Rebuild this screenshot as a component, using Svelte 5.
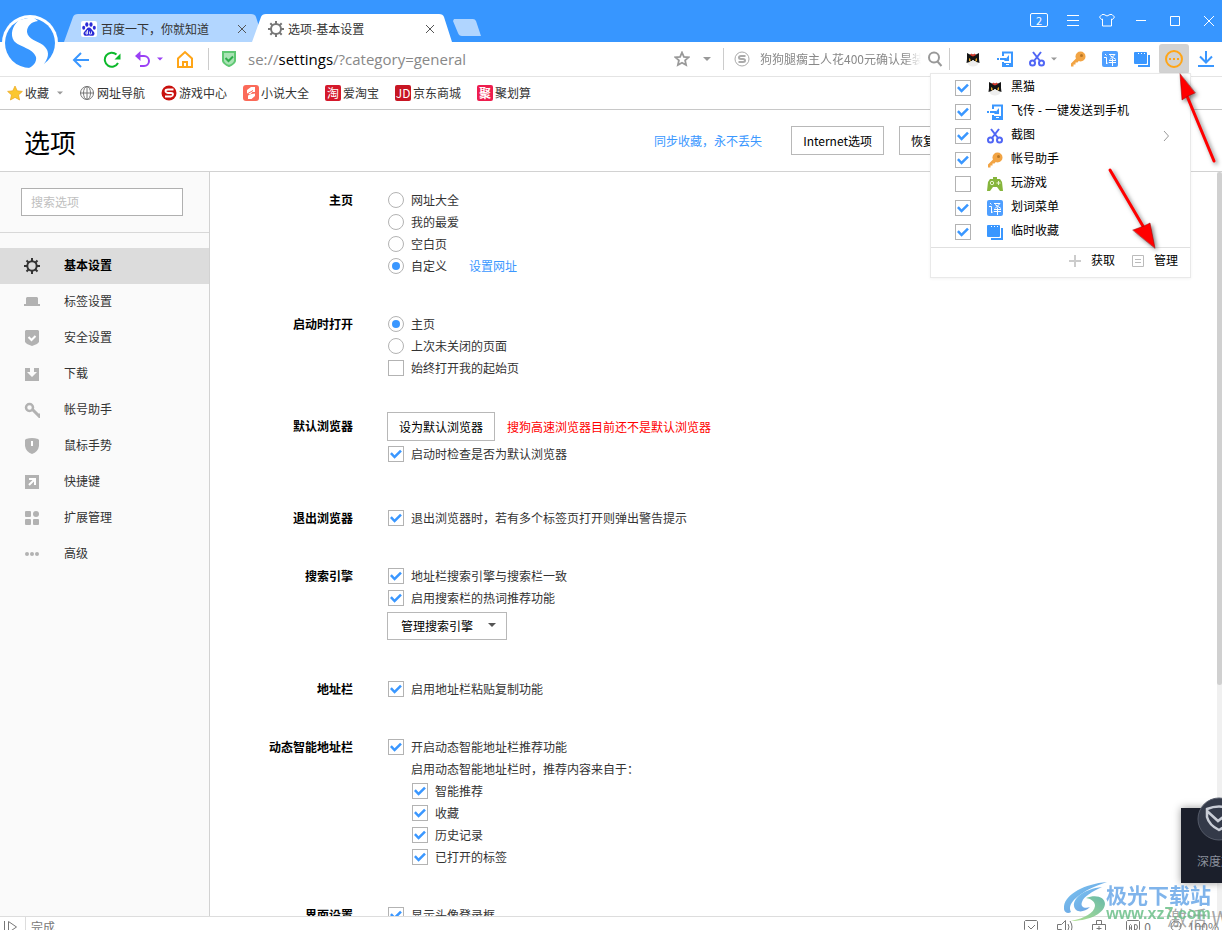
<script lang="ts">
  type Option = { label: string; type: 'radio' | 'checkbox'; checked: boolean; group?: string; link?: string };

  const bookmarks = [
    { icon: 'globe', label: '网址导航' },
    { icon: 'game', label: '游戏中心' },
    { icon: 'novel', label: '小说大全' },
    { icon: 'tao', label: '爱淘宝' },
    { icon: 'jd', label: '京东商城' },
    { icon: 'ju', label: '聚划算' }
  ];

  const navItems = [
    { icon: 'gear', label: '基本设置' },
    { icon: 'tab', label: '标签设置' },
    { icon: 'safe', label: '安全设置' },
    { icon: 'down', label: '下载' },
    { icon: 'lock', label: '帐号助手' },
    { icon: 'mouse', label: '鼠标手势' },
    { icon: 'shortcut', label: '快捷键' },
    { icon: 'ext', label: '扩展管理' },
    { icon: 'dots', label: '高级' }
  ];
  let active = $state('基本设置');

  let tools = $state([
    { icon: 'cat', label: '黑猫', checked: true },
    { icon: 'phone', label: '飞传 - 一键发送到手机', checked: true },
    { icon: 'scissors', label: '截图', checked: true },
    { icon: 'key', label: '帐号助手', checked: true },
    { icon: 'pad', label: '玩游戏', checked: false },
    { icon: 'translate', label: '划词菜单', checked: true },
    { icon: 'temp', label: '临时收藏', checked: true }
  ]);
  let menuOpen = $state(true);

  const homeOptions: Option[] = [
    { label: '网址大全', type: 'radio', group: 'home', checked: false },
    { label: '我的最爱', type: 'radio', group: 'home', checked: false },
    { label: '空白页', type: 'radio', group: 'home', checked: false },
    { label: '自定义', type: 'radio', group: 'home', checked: true, link: '设置网址' }
  ];
  const startOptions: Option[] = [
    { label: '主页', type: 'radio', group: 'start', checked: true },
    { label: '上次未关闭的页面', type: 'radio', group: 'start', checked: false },
    { label: '始终打开我的起始页', type: 'checkbox', checked: false }
  ];
  const check = (label: string): Option => ({ label, type: 'checkbox', checked: true });
</script>

{#snippet caret()}
  <svg class="caret" viewBox="0 0 8 4"><path d="M0 0h8L4 4z" /></svg>
{/snippet}

{#snippet toolIcon(name: string)}
  <svg class="icon16" viewBox="0 0 16 16">
    {#if name === 'cat'}
      <ellipse cx="8" cy="12" rx="5.500" ry="3.500" fill="#eee" />
      <path d="M2 2l3 1.500h6L14 2v6l.500 4-3-1-1-1h-5l-1 1-3 1L2 8z" fill="#151515" />
      <path d="M5 4l1.500-1.500L8 4l1.500-1.500L11 4 8 5.500z" fill="#e23a2c" />
      <path d="M4 7l1.500 1v2.500L4 10zM12 7l-1.500 1v2.500l1.500-.5z" fill="#e3a52a" />
      <path d="M7 9h2l-1 3z" fill="#eee" />
    {:else if name === 'phone'}
      <path d="M6 5V1.500h9v13H6V11" fill="none" stroke="#3a97ff" stroke-width="2" />
      <path d="M0 8h2M3 8h6" stroke="#3a97ff" stroke-width="2" />
      <path d="M12 4v6H7z" fill="#3a97ff" />
      <path d="M5 12h11v4H5z" fill="#3a97ff" />
      <path d="M9 13h3v1H9z" fill="#fff" />
    {:else if name === 'scissors'}
      <g fill="none" stroke="#5066f5" stroke-width="2">
        <path d="M4 1l7 9M12 1L5 10" />
        <circle cx="3.500" cy="12" r="2.500" /><circle cx="12.500" cy="12" r="2.500" />
      </g>
    {:else if name === 'key'}
      <circle cx="10.500" cy="5.500" r="5" fill="#f2a444" />
      <path d="M6.500 7L1 12.500V15.500h2.500v-2h2v-2h2L9.500 9z" fill="#f2a444" />
      <circle cx="11.500" cy="4.500" r="1.500" fill="#b97624" />
    {:else if name === 'pad'}
      <path d="M3 3h3V1h4v2h3l2 3 1 9h-3l-3-4H6l-3 4H0l1-9z" fill="#86b53c" />
      <circle cx="5" cy="7" r="1.700" fill="none" stroke="#e9f5d2" />
      <path d="M11.500 5v4M9.500 7h4" stroke="#e9f5d2" />
    {:else if name === 'translate'}
      <rect width="16" height="16" rx="2" fill="#4f9fff" />
      <g fill="none" stroke="#fff">
        <path d="M3 3l1.500 1.500M2 6.500h2.500V13L6 11.500M7 3.500h6L8 8.500M8 4.500l6 4M7 9.500h7M7 11.500h7M10.500 7.500V15" />
      </g>
    {:else if name === 'temp'}
      <path d="M4 15h11V4" fill="none" stroke="#3a97ff" stroke-width="2" />
      <rect y="1" width="13" height="12" rx="1" fill="#3a97ff" />
      <path d="M4 2.500h1M7 2.500h1M10 2.500h1" stroke="#fff" />
    {/if}
  </svg>
{/snippet}

{#snippet navIcon(name: string)}
  <svg class="icon16" viewBox="0 0 16 16" fill="#b2b2b2">
    {#if name === 'gear'}
      <circle cx="8" cy="8" r="4.700" fill="none" stroke="#333" stroke-width="2" />
      <path d="M8 0v3M8 13v3M0 8h3M13 8h3M2.500 2.500l2 2M11.500 11.500l2 2M13.500 2.500l-2 2M4.500 11.500l-2 2" stroke="#333" stroke-width="2" />
    {:else if name === 'tab'}
      <path d="M3 3h10l1 1v6h2v2H0v-2h2V4z" />
    {:else if name === 'safe'}
      <path d="M2 0h12l1 1v11l-2 2-5 2-5-2-2-2V1z" />
      <path d="M4.500 7L7.500 10 11.500 6" fill="none" stroke="#fff" stroke-width="2" />
    {:else if name === 'down'}
      <path d="M1 2h5v4H3l5 5 5-5h-3V2h5v13H1z" />
    {:else if name === 'lock'}
      <path d="M8.500 7.500l6 6v-2" fill="none" stroke="#b2b2b2" stroke-width="3" />
      <circle cx="5.500" cy="5.500" r="3.500" fill="#fafafa" stroke="#b2b2b2" stroke-width="2.500" />
    {:else if name === 'mouse'}
      <path d="M2 1q6-2 12 0l1 1v6q-1 6-7 8-6-2-7-8V2z" />
      <path d="M8 3v5" stroke="#fff" stroke-width="2" />
    {:else if name === 'shortcut'}
      <path d="M1 1h14v14H1z" />
      <path d="M5 5h6v6M11 5l-6 6" fill="none" stroke="#fff" stroke-width="2" />
    {:else if name === 'ext'}
      <rect x="1" y="1" width="6" height="6" rx="1" /><circle cx="12" cy="4" r="3" />
      <rect x="1" y="9" width="6" height="6" rx="1" /><rect x="9" y="9" width="6" height="6" rx="1" />
    {:else}
      <circle cx="3" cy="8" r="2" /><circle cx="8" cy="8" r="2" /><circle cx="13" cy="8" r="2" />
    {/if}
  </svg>
{/snippet}

{#snippet bookmarkIcon(name: string)}
  {#if name === 'globe'}
    <svg class="icon16" viewBox="0 0 16 16" fill="none" stroke="#777">
      <circle cx="8" cy="8" r="6.500" /><ellipse cx="8" cy="8" rx="3.500" ry="6.500" /><path d="M8 1v14M1 8h14" />
    </svg>
  {:else if name === 'game'}
    <svg class="icon16" viewBox="0 0 16 16">
      <circle cx="8" cy="8" r="7.500" fill="#c9100d" />
      <path d="M12.500 4.500H7Q4.500 4.500 4.500 6T7 8h3q2 0 2 1.500T10 11.500H4" fill="none" stroke="#fff" stroke-width="1.800" />
    </svg>
  {:else if name === 'novel'}
    <svg class="icon16" viewBox="0 0 16 16">
      <rect width="16" height="16" rx="3" fill="#fb6a59" />
      <path d="M4 5l4-3h4v5H9.500L7 9.500 4 8zM5 10.500L8.500 9 12 8.500V11l-3.500 3H5z" fill="#fff" />
      <path d="M5 8.500l5-3" stroke="#fb6a59" />
    </svg>
  {:else if name === 'tao'}
    <span class="badge tao">淘</span>
  {:else if name === 'jd'}
    <span class="badge jd">JD</span>
  {:else}
    <span class="badge ju">聚</span>
  {/if}
{/snippet}

{#snippet option(item: Option)}
  <div class="option">
    <label><input type={item.type} name={item.group} checked={item.checked} />{item.label}</label>
    {#if item.link}<a href="#home">{item.link}</a>{/if}
  </div>
{/snippet}

<div class="browser">
  <header class="titlebar">
    <svg class="logo" viewBox="0 0 60 60">
      <circle cx="30" cy="29" r="28" fill="#fff" />
      <circle cx="30" cy="29" r="25" fill="#3796ff" />
      <path d="M19 6C12 12 10 21 14 27C19 33 33 34 36 43C37 48 33 52 29 54L31 57L43 53L44 50C50 42 49 36 43 31C37 27 28 25 27 18C27 12 31 8 38 7L33 3Z" fill="#fff" />
    </svg>
    <div class="tabs">
      <div class="tab">
        <svg class="tab-shape" viewBox="0 0 200 28" preserveAspectRatio="none"><path d="M0 28L9 3Q10 0 14 0H187Q191 0 192 3L200 28z" fill="#b2d6ff" /></svg>
        <svg class="icon16" viewBox="0 0 16 16">
          <rect width="16" height="16" rx="2" fill="#fff" />
          <g fill="#2b2bd6">
            <ellipse cx="5.800" cy="3.500" rx="1.600" ry="2.200" /><ellipse cx="10" cy="3.500" rx="1.600" ry="2.200" />
            <ellipse cx="2.700" cy="6.800" rx="1.500" ry="2" /><ellipse cx="13.300" cy="6.800" rx="1.500" ry="2" />
            <path d="M8 6.500c2 0 2.500 2 4 3.500s2 2.500 1 4-3 .5-5 .5-4 1-5-.5-.5-2.500 1-4 2-3.500 4-3.500z" />
          </g>
          <path d="M6.500 9v4H5v-2h1.500M8.500 10.500V13h2v-2.500" fill="none" stroke="#fff" stroke-width=".8" />
        </svg>
        <span class="tab-title">百度一下，你就知道</span>
        <button class="close" aria-label="关闭"><svg viewBox="0 0 10 10"><path d="M1 1l8 8M9 1L1 9" /></svg></button>
      </div>
      <div class="tab current">
        <svg class="tab-shape" viewBox="0 0 200 28" preserveAspectRatio="none"><path d="M0 28L9 3Q10 0 14 0H187Q191 0 192 3L200 28z" fill="#fff" /></svg>
        <svg class="icon16" viewBox="0 0 16 16" fill="none" stroke="#777">
          <circle cx="8" cy="8" r="5" stroke-width="2" />
          <path d="M8 0v3M8 13v3M0 8h3M13 8h3M2.300 2.300l2 2M11.700 11.700l2 2M13.700 2.300l-2 2M4.300 11.700l-2 2" stroke-width="2" />
        </svg>
        <span class="tab-title">选项-基本设置</span>
        <button class="close" aria-label="关闭"><svg viewBox="0 0 10 10"><path d="M1 1l8 8M9 1L1 9" /></svg></button>
      </div>
      <button class="new-tab" aria-label="新建标签"><svg viewBox="0 0 28 17"><path d="M1 0H20Q22 0 23 2L28 17H9Q6 17 5 14L0 2z" fill="#b0d5ff" /></svg></button>
    </div>
    <div class="window-buttons">
      <button class="count">2</button>
      <button aria-label="菜单"><svg viewBox="0 0 18 18"><path d="M3 4.500h12M3 9.500h12M3 14.500h12" /></svg></button>
      <button aria-label="皮肤"><svg viewBox="0 0 18 18"><path d="M6 3.500Q9 6.500 12 3.500h2L16.500 6l-2 2.500-1-.5v7h-9V8l-1 .5-2-2.500L4 3.500z" /></svg></button>
      <button aria-label="最小化"><svg viewBox="0 0 18 18"><path d="M4 9.500h10" /></svg></button>
      <button aria-label="最大化"><svg viewBox="0 0 18 18"><path d="M4.500 5.500h9v9h-9z" /></svg></button>
      <button aria-label="关闭"><svg viewBox="0 0 18 18"><path d="M4 5l10 10M14 5L4 15" /></svg></button>
    </div>
  </header>

  <div class="toolbar">
    <div class="nav-buttons">
      <button aria-label="后退"><svg viewBox="0 0 18 18" stroke="#3a97ff"><path d="M17 10H2M9 3L2 10l7 7" /></svg></button>
      <button aria-label="刷新"><svg viewBox="0 0 18 18" stroke="#0cb92b"><path d="M13.500 4.500A7 7 0 1 0 15 13" /><path d="M17.500 3.500v6h-6z" fill="#0cb92b" stroke="none" /></svg></button>
      <button class="undo" aria-label="恢复"><svg viewBox="0 0 18 18" stroke="#9a40f5"><path d="M3 6h7a5 5 0 0 1 0 10H6" /><path d="M6.500 1v10L1 6z" fill="#9a40f5" stroke="none" /></svg>{@render caret()}</button>
      <button aria-label="主页"><svg viewBox="0 0 18 18" stroke="#ffa517"><path d="M2 17V8.500L9 2l7 6.500V17zM7 17v-5h4v5" /></svg></button>
    </div>
    <span class="divider"></span>
    <div class="address">
      <svg class="icon16" viewBox="0 0 16 16"><path d="M2 1h12v9q-1 3-6 5-5-2-6-5z" fill="#a9e3b4" stroke="#5fc873" stroke-width="2" /><path d="M4.500 7l3 3 4.500-4.500" fill="none" stroke="#2fae4c" stroke-width="2" /></svg>
      <span class="url">se://<b>settings</b>/?category=general</span>
      <button aria-label="收藏"><svg class="icon16" viewBox="0 0 16 16" fill="none" stroke="#999" stroke-width="1.800"><path d="M8 1.500l1.900 4.300 4.700.5-3.500 3.100 1 4.600L8 11.700 3.900 14l1-4.600L1.400 6.300l4.700-.5z" /></svg></button>
      {@render caret()}
    </div>
    <span class="divider"></span>
    <div class="search">
      <svg class="icon16" viewBox="0 0 16 16" fill="none" stroke="#aaa"><circle cx="8" cy="8" r="7" /><path d="M11.500 5H7Q5 5 5 6.500T7 8h2q2 0 2 1.500T9 11H4.500" stroke-width="2" /></svg>
      <input aria-label="搜索" placeholder="狗狗腿瘸主人花400元确认是装瘸" />
      <button aria-label="搜索"><svg class="icon16" viewBox="0 0 16 16" fill="none" stroke="#999" stroke-width="2"><circle cx="7" cy="6.500" r="5" /><path d="M10.500 10.500l4 4.500" /></svg></button>
    </div>
    <span class="divider"></span>
    <div class="tool-buttons">
      <button aria-label="黑猫">{@render toolIcon('cat')}</button>
      <button aria-label="飞传">{@render toolIcon('phone')}</button>
      <button class="cut" aria-label="截图">{@render toolIcon('scissors')}{@render caret()}</button>
      <button aria-label="帐号助手">{@render toolIcon('key')}</button>
      <button aria-label="划词菜单">{@render toolIcon('translate')}</button>
      <button aria-label="临时收藏">{@render toolIcon('temp')}</button>
      <button class="more" aria-label="更多" onclick={() => (menuOpen = !menuOpen)}>
        <svg viewBox="0 0 18 18" stroke="#ffa517" stroke-width="2" fill="none"><circle cx="9" cy="9" r="8" /><path d="M4 9h2M8 9h2M12 9h2" /></svg>
      </button>
      <button aria-label="下载"><svg class="icon16" viewBox="0 0 16 16" fill="none" stroke="#3a97ff" stroke-width="2"><path d="M8 0v11M2 5.500l6 6 6-6M0 15h16" /></svg></button>
    </div>
  </div>

  <nav class="bookmarks">
    <button class="fav">
      <svg class="icon16" viewBox="0 0 16 16"><path d="M8 1l2.200 4.800 5.200.6-3.900 3.500 1.100 5.100L8 12.400 3.400 15l1.100-5.100L.6 6.400l5.200-.6z" fill="#fbc72f" stroke="#e9a51c" stroke-width=".7" /></svg>
      收藏 {@render caret()}
    </button>
    {#each bookmarks as item}
      <a href="#bookmark">{@render bookmarkIcon(item.icon)}{item.label}</a>
    {/each}
  </nav>

  <div class="page-head">
    <h1>选项</h1>
    <a href="#sync">同步收藏，永不丢失</a>
    <button class="btn">Internet选项</button>
    <button class="btn">恢复默认设置</button>
  </div>

  <div class="page">
    <aside>
      <div class="filter"><input type="text" placeholder="搜索选项" aria-label="搜索选项" /></div>
      <nav>
        {#each navItems as item}
          <button class:active={active === item.label} onclick={() => (active = item.label)}>
            {@render navIcon(item.icon)}<span>{item.label}</span>
          </button>
        {/each}
      </nav>
    </aside>

    <main>
      <section>
        <h2>主页</h2>
        <div>{#each homeOptions as item}{@render option(item)}{/each}</div>
      </section>
      <section>
        <h2>启动时打开</h2>
        <div>{#each startOptions as item}{@render option(item)}{/each}</div>
      </section>
      <section class="roomy">
        <h2>默认浏览器</h2>
        <div>
          <div class="control first">
            <button class="btn">设为默认浏览器</button>
            <span class="warn">搜狗高速浏览器目前还不是默认浏览器</span>
          </div>
          {@render option(check('启动时检查是否为默认浏览器'))}
        </div>
      </section>
      <section>
        <h2>退出浏览器</h2>
        <div>{@render option(check('退出浏览器时，若有多个标签页打开则弹出警告提示'))}</div>
      </section>
      <section>
        <h2>搜索引擎</h2>
        <div>
          {@render option(check('地址栏搜索引擎与搜索栏一致'))}
          {@render option(check('启用搜索栏的热词推荐功能'))}
          <div class="control last">
            <span class="select">
              <select aria-label="搜索引擎"><option>管理搜索引擎</option></select>
              {@render caret()}
            </span>
          </div>
        </div>
      </section>
      <section>
        <h2>地址栏</h2>
        <div>{@render option(check('启用地址栏粘贴复制功能'))}</div>
      </section>
      <section>
        <h2>动态智能地址栏</h2>
        <div>
          {@render option(check('开启动态智能地址栏推荐功能'))}
          <div class="nested">
            <p>启用动态智能地址栏时，推荐内容来自于：</p>
            {#each ['智能推荐', '收藏', '历史记录', '已打开的标签'] as label}
              {@render option(check(label))}
            {/each}
          </div>
        </div>
      </section>
      <section>
        <h2>界面设置</h2>
        <div>{@render option(check('显示头像登录框'))}</div>
      </section>
    </main>
    <div class="scrollbar"><span></span></div>
  </div>

  <footer class="status">
    <svg class="icon16" viewBox="0 0 16 16" fill="none" stroke="#777"><path d="M1.500 2v12M5.500 2.500v11l8-5.500z" /></svg>
    <span class="state">完成</span>
    <div class="status-tools">
      <svg class="icon16" viewBox="0 0 16 16"><path d="M2.500 1.500h11l1 1v8l-1.500 2-5 2-5-2-1.500-2v-8zM5 7l3 3 4-4" /></svg>
      <svg class="icon16" viewBox="0 0 16 16"><path d="M.5 5.500h4l4-4v13l-4-4h-4zM11 5q2 3 0 6M13 2q4 6 0 12" /></svg>
      <svg class="icon16" viewBox="0 0 16 16"><path d="M1.500 5.500h13v9h-13zM5.500 5V1.500h5V5M8 7v5M5.500 9.500h5" /></svg>
      <span class="ad"><svg class="icon16" viewBox="0 0 16 16"><path d="M2.500 1.500h11l1 1v8l-1.500 2-5 2-5-2-1.500-2v-8zM4.500 11V6.500l1-1 1 1V11M4.500 9h2M9.500 5.500V11q3 0 3-3t-3-2.500" /></svg>0</span>
      <span class="zoom"><svg class="icon16" viewBox="0 0 16 16"><circle cx="7" cy="7" r="5" /><path d="M11 11l4 4M5 7h4" /></svg>100%</span>
    </div>
  </footer>

  {#if menuOpen}
    <div class="menu">
      <ul>
        {#each tools as tool}
          <li>
            <label><input type="checkbox" bind:checked={tool.checked} />{@render toolIcon(tool.icon)}<span>{tool.label}</span></label>
            {#if tool.icon === 'scissors'}
              <svg class="chevron" viewBox="0 0 6 10"><path d="M1 0l4.500 5L1 10" fill="none" stroke="#999" /></svg>
            {/if}
          </li>
        {/each}
      </ul>
      <div class="menu-foot">
        <button><svg viewBox="0 0 12 12"><path d="M6 0v12M0 6h12" stroke="#ccc" stroke-width="2" /></svg>获取</button>
        <button><svg viewBox="0 0 12 12" fill="none" stroke="#bbb"><path d="M.5.5h11v11H.5z" /><path d="M3 4.500h6M3 7.500h6" /></svg>管理</button>
      </div>
    </div>
  {/if}

  <div class="speedup">
    <svg viewBox="0 0 44 44">
      <circle cx="22" cy="22" r="21" fill="#343a49" stroke="#555b69" />
      <path d="M10 12q12-5 24 0v8q-2 8-12 13-10-5-12-13zM10 14l11 10 13-10" fill="none" stroke="#c9cdd6" stroke-width="2.500" />
    </svg>
    <span>深度加速</span>
  </div>

  <div class="activate">激活 W</div>
  <div class="site-mark">
    <svg viewBox="0 0 44 40">
      <defs>
        <linearGradient id="swirl" x1="0" y1="0" x2="1" y2="1"><stop offset="0" stop-color="#62bdf0" /><stop offset="1" stop-color="#5189d8" /></linearGradient>
        <linearGradient id="leaf" x1="1" y1="0" x2="0" y2="1"><stop offset="0" stop-color="#4fae9b" /><stop offset="1" stop-color="#a5dc7e" /></linearGradient>
      </defs>
      <path d="M43 0C20 2 2 12 0 24C-1 31 4 32 7 30C3 24 10 11 43 0z" fill="url(#swirl)" />
      <path d="M38 5C20 7 9 16 10 24C11 31 20 31 26 25C21 27 16 25 18 20C20 14 28 10 38 5z" fill="url(#swirl)" />
      <path d="M22 16C32 12 41 15 41 22C40 33 22 39 7 39C21 36 30 31 31 24C31 20 28 17 22 16z" fill="url(#leaf)" />
    </svg>
    <div><strong>极光下载站</strong><span>www.xz7.com</span></div>
  </div>

  <svg class="pointers" viewBox="0 0 112 180">
    <g fill="#f00" stroke="#f00" stroke-linecap="round">
      <path d="M82 26l27 65M5 100l37 63" stroke-width="3" />
      <path d="M75 4L77 30l6-4 7-3zM50 178l-5-25-6 3-11 4z" stroke="#900" stroke-width=".5" />
    </g>
  </svg>
</div>

<style>
  :global(body) {
    margin: 0;
    overflow: hidden;
  }

  .browser {
    position: relative;
    display: flex;
    flex-direction: column;
    height: 100vh;
    overflow: hidden;
    background: #fff;
    color: #333;
    font: 12px/22px "Noto Sans CJK SC", sans-serif;
  }

  button,
  input,
  select {
    font: inherit;
    color: inherit;
    box-sizing: border-box;
  }

  button {
    display: flex;
    align-items: center;
    justify-content: center;
    padding: 0;
    border: 0;
    background: none;
  }

  a {
    color: #3a97ff;
    text-decoration: none;
  }

  svg {
    flex: none;
    display: block;
  }

  .icon16 {
    width: 16px;
    height: 16px;
  }

  .caret {
    width: 8px;
    height: 4px;
    fill: #999;
  }

  /* title bar */
  .titlebar {
    flex: none;
    display: flex;
    justify-content: space-between;
    height: 42px;
    background: #3796ff;
  }

  .logo {
    position: absolute;
    left: 0;
    top: 14px;
    width: 60px;
    height: 60px;
    z-index: 2;
  }

  .tabs {
    display: flex;
    align-items: flex-end;
    padding-left: 64px;
  }

  .tab {
    position: relative;
    display: flex;
    align-items: center;
    width: 200px;
    height: 28px;
    padding: 2px 17px 0;
    box-sizing: border-box;
    gap: 4px;
  }

  .tab.current {
    margin-left: -12px;
    padding-left: 16px;
  }

  .tab-shape {
    position: absolute;
    inset: 0;
    width: 100%;
    height: 100%;
  }

  .tab .icon16,
  .tab-title,
  .close {
    position: relative;
  }

  .tab-title {
    flex: 1;
    white-space: nowrap;
  }

  .close svg {
    width: 10px;
    height: 10px;
    stroke: #555;
  }

  .new-tab {
    height: 17px;
    margin: 0 0 6px 1px;
  }

  .new-tab svg {
    width: 28px;
    height: 17px;
  }

  .window-buttons {
    display: flex;
    align-items: center;
    gap: 16px;
    height: 40px;
    padding-right: 4px;
    color: #fff;
  }

  .window-buttons button,
  .window-buttons svg {
    width: 18px;
    height: 18px;
    fill: none;
    stroke: #fff;
  }

  .window-buttons .count {
    height: 14px;
    border: 1px solid #fff;
    border-radius: 2px;
    stroke: none;
    font-size: 11px;
    line-height: 12px;
  }

  /* toolbar */
  .toolbar {
    flex: none;
    display: flex;
    align-items: center;
    height: 34px;
    border-bottom: 1px solid #e4e4e4;
  }

  .nav-buttons {
    display: flex;
    align-items: center;
    gap: 13px;
    padding: 0 14px 0 72px;
  }

  .nav-buttons button > svg:first-child {
    width: 18px;
    height: 18px;
    fill: none;
    stroke-width: 2;
  }

  .undo {
    gap: 5px;
  }

  .undo .caret {
    width: 6px;
    fill: #9a40f5;
  }

  .divider {
    width: 1px;
    height: 22px;
    background: #ccc;
  }

  .address {
    flex: 1;
    display: flex;
    align-items: center;
    padding: 0 12px 0 12px;
  }

  .url {
    flex: 1;
    padding-left: 11px;
    color: #888;
    font: 15px/22px "Open Sans", sans-serif;
  }

  .url b {
    color: #000;
    font-weight: normal;
  }

  .address .caret {
    margin-left: 13px;
  }

  .search {
    display: flex;
    align-items: center;
    padding: 0 6px 0 10px;
  }

  .search input {
    width: 161px;
    margin: 0 6px 0 10px;
    padding: 0;
    border: 0;
    outline: 0;
    mask-image: linear-gradient(to right, #000 90%, transparent);
  }

  .search input::placeholder {
    color: #888;
  }

  .tool-buttons {
    display: flex;
    align-items: center;
    padding: 0 8px 0 15px;
    gap: 16px;
  }

  .cut {
    gap: 6px;
  }

  .cut .caret {
    width: 6px;
    margin-right: -3px;
  }

  .tool-buttons .more {
    width: 30px;
    height: 30px;
    margin: 0 -7px;
    border-radius: 3px;
    background: #d2d2d2;
  }

  .more svg {
    width: 18px;
    height: 18px;
  }

  /* bookmarks */
  .bookmarks {
    flex: none;
    display: flex;
    align-items: center;
    gap: 16px;
    height: 32px;
    padding-left: 7px;
    border-bottom: 1px solid #c8c8c8;
  }

  .bookmarks a,
  .fav {
    display: flex;
    align-items: center;
    gap: 2px;
    color: #333;
  }

  .fav .caret {
    width: 6px;
    margin-left: 6px;
  }

  .badge {
    width: 16px;
    height: 16px;
    border-radius: 2px;
    background: #d5192b;
    color: #fff;
    font-size: 12px;
    line-height: 16px;
    text-align: center;
  }

  .badge.jd {
    background: #c81623;
  }

  .badge.ju {
    background: #ee1e4e;
    font-weight: bold;
  }

  /* options page */
  .page-head {
    flex: none;
    display: flex;
    align-items: center;
    height: 61px;
    padding: 0 227px 0 24px;
    border-bottom: 1px solid #d2d2d2;
  }

  h1 {
    flex: 1;
    margin: 0;
    padding-top: 2px;
    color: #000;
    font-size: 26px;
    font-weight: normal;
    line-height: 36px;
  }

  .page-head .btn:first-of-type {
    margin: 0 15px 0 29px;
  }

  .btn {
    height: 29px;
    padding: 0 11px;
    border: 1px solid #b8b8b8;
    background: #fff;
    color: #000;
  }

  .page {
    flex: 1;
    display: flex;
    min-height: 0;
  }

  aside {
    flex: none;
    width: 209px;
    border-right: 1px solid #d2d2d2;
    background: #fafafa;
  }

  .filter {
    display: flex;
    padding: 16px 26px 16px 21px;
    border-bottom: 1px solid #d8d8d8;
  }

  .filter input {
    width: 100%;
    height: 28px;
    padding: 0 9px 2px;
    border: 1px solid #b0b0b0;
    background: #fff;
  }

  .filter input::placeholder {
    color: #c0c0c0;
  }

  aside nav {
    padding-top: 15px;
  }

  aside nav button {
    justify-content: flex-start;
    gap: 24px;
    width: 100%;
    height: 36px;
    padding-left: 24px;
  }

  aside nav span,
  .menu label span {
    padding-bottom: 2px;
  }

  aside nav .active {
    background: #dcdcdc;
    color: #000;
    font-weight: bold;
  }

  main {
    flex: 1;
    padding: 17px 0 0;
    overflow: hidden;
  }

  section {
    display: grid;
    grid-template-columns: 143px 1fr;
    column-gap: 35px;
    margin-bottom: 36px;
  }

  section.roomy {
    margin-bottom: 42px;
  }

  h2 {
    margin: 0;
    color: #000;
    font-size: 12px;
    line-height: 22px;
    text-align: right;
  }

  .option {
    display: flex;
    gap: 22px;
  }

  .option label {
    display: flex;
    align-items: center;
    gap: 7px;
  }

  input[type='checkbox'],
  input[type='radio'] {
    flex: none;
    display: grid;
    place-items: center;
    width: 16px;
    height: 16px;
    margin: 0;
    border: 1px solid #b3b3b3;
    background: #fff;
    appearance: none;
  }

  input[type='radio'] {
    border-radius: 50%;
  }

  input[type='checkbox']:checked::before {
    content: '';
    width: 12px;
    height: 12px;
    background: #3a97ff;
    clip-path: polygon(0 50%, 15% 35%, 38% 60%, 84% 14%, 99% 29%, 38% 90%);
  }

  input[type='radio']:checked::before {
    content: '';
    width: 8px;
    height: 8px;
    border-radius: 50%;
    background: #3a97ff;
  }

  .control {
    display: flex;
    align-items: center;
    gap: 12px;
    margin-left: -1px;
  }

  .control.first {
    margin-top: -3px;
    margin-bottom: 2px;
  }

  .control.last {
    margin-top: 3px;
    margin-bottom: 2px;
  }

  .warn {
    color: #f00;
  }

  .select {
    position: relative;
    display: flex;
  }

  .select select {
    width: 120px;
    height: 28px;
    padding: 0 13px;
    border: 1px solid #b8b8b8;
    border-radius: 0;
    background: #fff;
    color: #000;
    appearance: none;
  }

  .select .caret {
    position: absolute;
    right: 11px;
    top: 11px;
    fill: #555;
  }

  .nested {
    padding-left: 24px;
  }

  .nested p {
    margin: 0 0 0 -1px;
  }

  .scrollbar {
    flex: none;
    width: 5px;
    background: #f0f0f0;
  }

  .scrollbar span {
    display: block;
    height: 69%;
    border-radius: 3px;
    background: #d0d0d0;
  }

  /* status bar, its lower part runs below the window */
  .status {
    flex: none;
    display: flex;
    align-items: flex-start;
    height: 13px;
    border-top: 1px solid #ddd;
    padding-left: 3px;
    line-height: 20px;
    color: #777;
  }

  .status svg {
    margin-top: 2px;
  }

  .status .state {
    flex: 1;
    margin-left: 6px;
    padding-left: 5px;
    border-left: 1px solid #ddd;
  }

  .status-tools {
    display: flex;
    gap: 18px;
    padding-right: 3px;
    fill: none;
    stroke: #777;
  }

  .ad,
  .zoom {
    display: flex;
    gap: 3px;
    stroke: none;
  }

  .ad svg,
  .zoom svg {
    stroke: #777;
  }

  /* toolbar menu */
  .menu {
    position: absolute;
    top: 73px;
    right: 31px;
    width: 259px;
    border: 1px solid #e9e9e9;
    background: #fff;
    box-shadow: 0 1px 3px rgba(0, 0, 0, 0.05);
    color: #000;
    font-family: "Open Sans", "Noto Sans CJK SC", sans-serif;
  }

  .menu ul {
    margin: 0;
    padding: 2px 21px 3px 24px;
    list-style: none;
    border-bottom: 1px solid #e0e0e0;
  }

  .menu li {
    display: flex;
    align-items: center;
    justify-content: space-between;
    height: 24px;
  }

  .menu label {
    display: flex;
    align-items: center;
    gap: 8px;
  }

  .menu label input {
    margin-right: 8px;
  }

  .chevron {
    width: 6px;
    height: 10px;
  }

  .menu-foot {
    display: flex;
    justify-content: flex-end;
    gap: 17px;
    height: 26px;
    padding: 0 12px 3px 0;
  }

  .menu-foot button {
    gap: 10px;
  }

  .menu-foot svg {
    width: 12px;
    height: 12px;
  }

  /* floating pieces over the page */
  .speedup {
    position: absolute;
    right: 0;
    bottom: 47px;
    width: 41px;
    height: 75px;
    background: #1b1f2b;
    color: #8a8f9b;
    box-shadow: 0 0 8px rgba(0, 0, 0, 0.4);
  }

  .speedup svg {
    position: absolute;
    left: 16px;
    top: -11px;
    width: 44px;
    height: 44px;
  }

  .speedup span {
    display: block;
    overflow: hidden;
    padding: 42px 0 0 16px;
    white-space: nowrap;
  }

  .activate {
    position: absolute;
    right: 0;
    bottom: 0;
    width: 55px;
    height: 24px;
    overflow: hidden;
    color: rgba(130, 130, 130, 0.7);
    font-size: 20px;
    line-height: 24px;
    white-space: nowrap;
  }

  .site-mark {
    position: absolute;
    right: 11px;
    bottom: 8px;
    display: flex;
    align-items: center;
    opacity: 0.85;
  }

  .site-mark svg {
    width: 44px;
    height: 40px;
    margin-right: -2px;
  }

  .site-mark div {
    display: flex;
    flex-direction: column;
    align-items: center;
  }

  .site-mark strong {
    color: #6aa8e8;
    font-size: 21px;
    line-height: 24px;
  }

  .site-mark span {
    color: #6cc08a;
    font: bold 16px/16px "Liberation Sans", sans-serif;
  }

  .pointers {
    position: absolute;
    right: 5px;
    top: 70px;
    width: 112px;
    height: 180px;
    pointer-events: none;
    filter: drop-shadow(2px 2px 2px rgba(0, 0, 0, 0.5));
  }
</style>
